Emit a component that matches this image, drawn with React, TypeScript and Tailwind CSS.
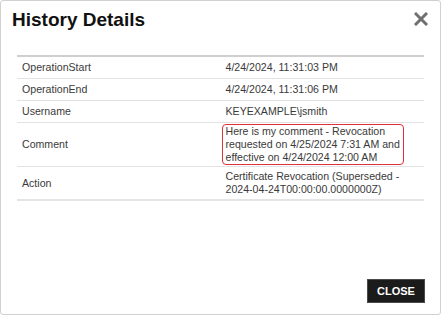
import React from "react";

const rows: { label: string; value: React.ReactNode; highlight?: boolean }[] = [
  { label: "OperationStart", value: "4/24/2024, 11:31:03 PM" },
  { label: "OperationEnd", value: "4/24/2024, 11:31:06 PM" },
  { label: "Username", value: "KEYEXAMPLE\\jsmith" },
  {
    label: "Comment",
    value: (
      <>
        Here is my comment - Revocation
        <br />
        requested on 4/25/2024 7:31 AM and
        <br />
        effective on 4/24/2024 12:00 AM
      </>
    ),
    highlight: true,
  },
  {
    label: "Action",
    value: (
      <>
        Certificate Revocation (Superseded -
        <br />
        2024-04-24T00:00:00.0000000Z)
      </>
    ),
  },
];

export default function App() {
  return (
    <div className="w-[442px] h-[316px] bg-white font-['Liberation_Sans',Arial,sans-serif]">
      <div className="w-[441px] h-[315px] border border-[#d0d0d0] rounded-[3px] flex flex-col">
        {/* Header */}
        <div className="flex items-start justify-between pl-[11px] pr-[10px] pt-[7px]">
          <h1 className="text-[19px] leading-[23px] font-bold text-[#111]">History Details</h1>
          <button className="mt-[4px] mr-[2px] text-[#707070]">
            <svg width="14" height="14" viewBox="0 0 14 14">
              <path d="M2 2 L12 12 M12 2 L2 12" stroke="currentColor" strokeWidth="3" strokeLinecap="square" />
            </svg>
          </button>
        </div>

        {/* Table */}
        <div className="px-[16px] mt-[24px]">
          <table className="w-full table-fixed border-collapse border-t-2 border-t-[#cfcfcf] border-b-2 border-b-[#e4e4e4] text-[10.6px] leading-[13px] text-[#3a3a3a]">
            <tbody>
              {rows.map((r) => (
                <tr key={r.label} className="border-b border-[#e2e2e2] last:border-b-0">
                  <td className={`pl-[5px] align-middle ${r.highlight ? "py-[1px]" : r.label === "Action" ? "py-[3px]" : "py-[4px]"}`}>
                    {r.label}
                  </td>
                  <td className={`pl-[5px] align-middle ${r.highlight ? "py-[1px]" : r.label === "Action" ? "py-[3px]" : "py-[4px]"}`}>
                    {r.highlight ? (
                      <span className="inline-block whitespace-nowrap border border-[#e0303a] rounded-[4px] px-[3px] -ml-[4px]">
                        {r.value}
                      </span>
                    ) : (
                      r.value
                    )}
                  </td>
                </tr>
              ))}
            </tbody>
          </table>
        </div>

        {/* Footer */}
        <div className="mt-auto flex justify-end px-[15px] pb-[11px]">
          <button className="w-[58px] h-[24px] bg-[#1b1b1b] border border-[#4a4a4a] text-white text-[11px] font-bold leading-none">
            CLOSE
          </button>
        </div>
      </div>
    </div>
  );
}
